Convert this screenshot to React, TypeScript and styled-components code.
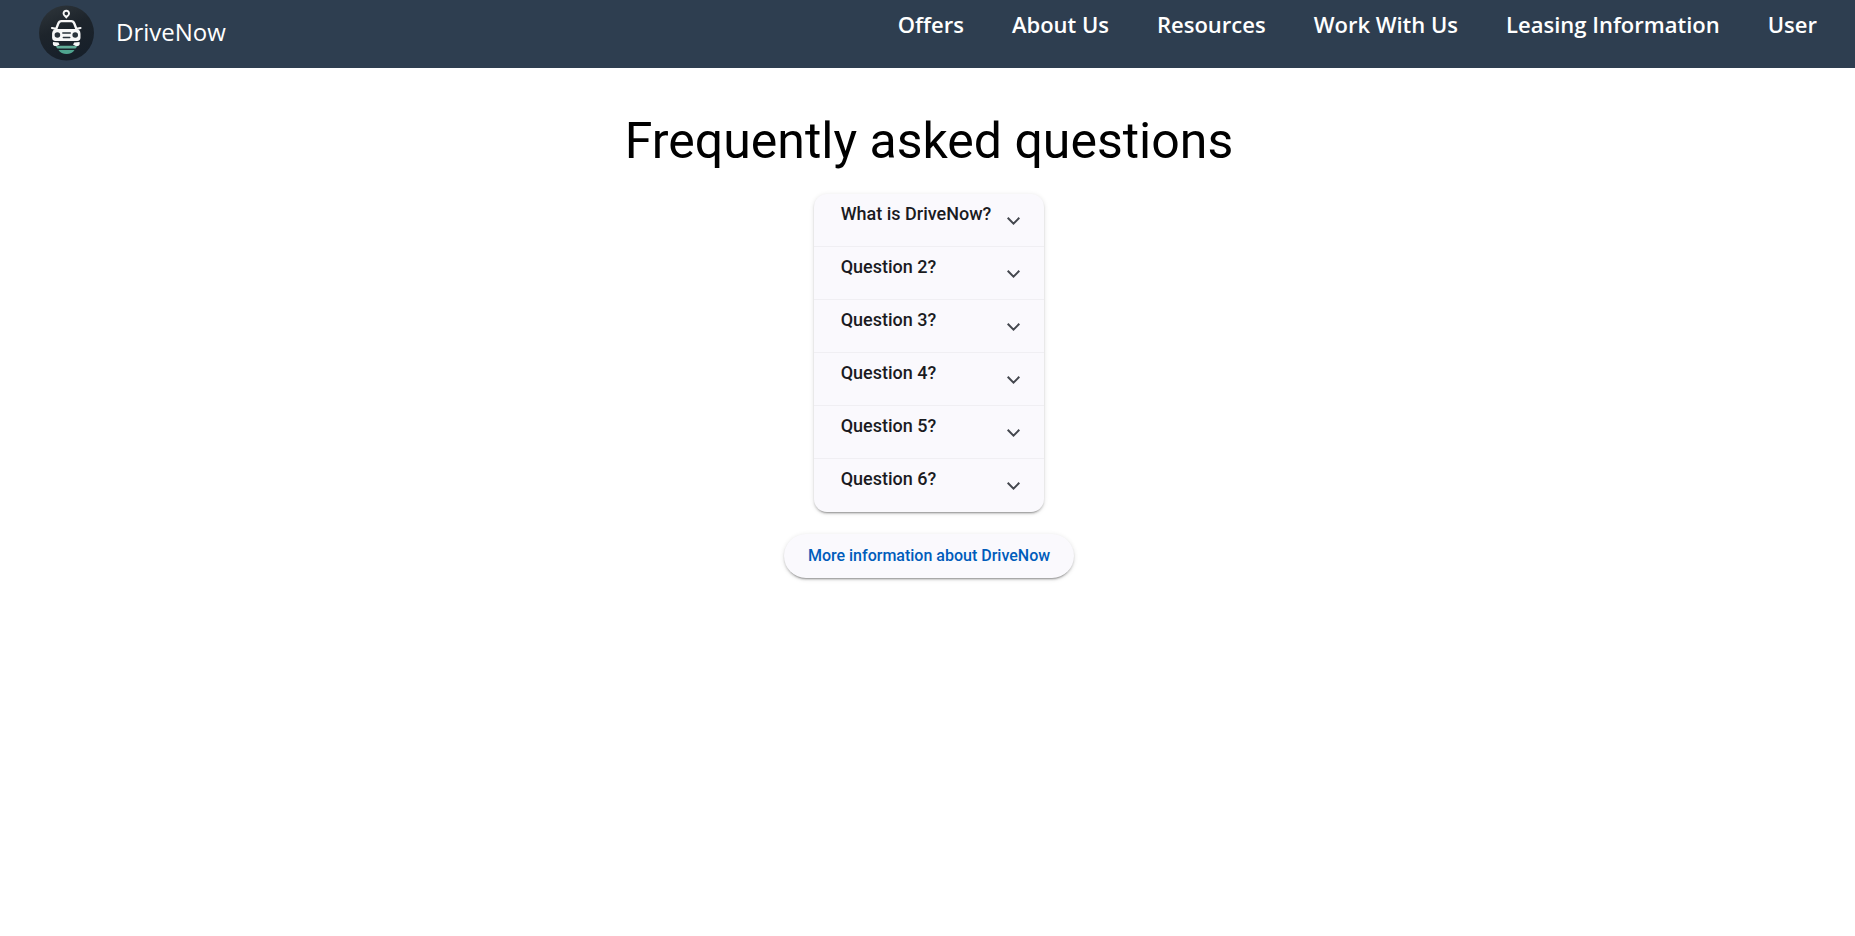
import React from "react";
import styled, { createGlobalStyle } from "styled-components";

const GlobalStyle = createGlobalStyle`
  body {
    margin: 0;
    background: #ffffff;
    color: #000000;
    font-family: Roboto, "Liberation Sans", sans-serif;
  }
`;

const Header = styled.header`
  display: flex;
  justify-content: space-between;
  height: 68px;
  padding: 0 38px;
  background: #2e3e50;
`;

const Brand = styled.a`
  display: flex;
  align-items: center;
  gap: 22px;
  padding-bottom: 2px;
  color: #ffffff;
  font: 400 24px/32px "Open Sans", sans-serif;
  text-decoration: none;
`;

const BrandName = styled.span`
  padding-bottom: 2px;
`;

const Nav = styled.nav`
  display: flex;
  align-items: flex-start;
  gap: 48px;
  padding-top: 8px;
`;

const NavLink = styled.a`
  color: #ffffff;
  font: 600 22px/32px "Open Sans", sans-serif;
  text-decoration: none;
  white-space: nowrap;
`;

const Main = styled.main`
  display: flex;
  flex-direction: column;
  align-items: center;
  padding: 41px 16px 40px 19px;
`;

const Title = styled.h1`
  margin: 0 0 21px;
  font-size: 50px;
  line-height: 64px;
  font-weight: 400;
  text-align: center;
`;

const raised = "0 3px 1px -2px rgba(0,0,0,0.2), 0 2px 2px 0 rgba(0,0,0,0.14), 0 1px 5px 0 rgba(0,0,0,0.12)";

const Accordion = styled.div`
  border-radius: 13px;
  overflow: hidden;
  background: #faf9fd;
  box-shadow: ${raised};
`;

const Question = styled.button`
  display: flex;
  justify-content: space-between;
  gap: 16px;
  width: 100%;
  height: 53px;
  padding: 8px 24px 0 27px;
  border: 0;
  border-bottom: 1px solid #f0eff3;
  background: transparent;
  color: #1a1b1f;
  font: 500 18px/24px Roboto, sans-serif;
  text-align: left;
  cursor: pointer;

  &:last-child {
    border-bottom-color: transparent;
  }
`;

const Chevron = styled.svg`
  flex: none;
  width: 13px;
  height: 8px;
  margin-top: 15px;
`;

const MoreButton = styled.button`
  height: 44px;
  margin-top: 22px;
  padding: 0 24px;
  border: 0;
  border-radius: 22px;
  background: #faf9fd;
  color: #005cbb;
  font: 500 16px/22px Roboto, sans-serif;
  box-shadow: ${raised};
  cursor: pointer;
`;

const links = ["Offers", "About Us", "Resources", "Work With Us", "Leasing Information", "User"];

const questions = ["What is DriveNow?", "Question 2?", "Question 3?", "Question 4?", "Question 5?", "Question 6?"];

function Logo() {
  return (
    <svg width="56" height="56" viewBox="0 0 56 56" aria-hidden="true">
      <defs>
        <linearGradient id="disc" x1="0" y1="0" x2="0.4" y2="1">
          <stop offset="0" stopColor="#30373c" />
          <stop offset="0.5" stopColor="#1d242b" />
          <stop offset="1" stopColor="#17202a" />
        </linearGradient>
      </defs>
      <circle cx="28.5" cy="28" r="27.5" fill="url(#disc)" />
      <path fillRule="evenodd" fill="#f7f7f7" d="M28.300 4.800c2.100 0 3.700 1.600 3.700 3.700 0 2.200-2.500 3.300-3.700 5.300-1.200-2-3.700-3.100-3.700-5.300 0-2.100 1.600-3.700 3.700-3.700zm0 2a1.800 1.800 0 1 0 0 3.600 1.800 1.800 0 0 0 0-3.600z" />
      <path fill="none" stroke="#f7f7f7" strokeWidth="2.300" strokeLinejoin="round" d="M18 24.500l2.300-6c.6-1.600 1.300-2.300 3-2.300h10c1.700 0 2.400.7 3 2.300l2.300 6" />
      <path fill="none" stroke="#f7f7f7" strokeWidth="2.200" strokeLinecap="round" d="M14 23l4 .8M42.500 23l-4 .8" />
      <path fill="#f7f7f7" d="M18.500 24h19.600c2.600 0 4.400 2 4.400 4.800v3.700c0 2.200-1.100 3.500-3.200 3.500h-22c-2.100 0-3.200-1.300-3.200-3.500v-3.700c0-2.800 1.800-4.800 4.400-4.800z" />
      <circle cx="19.400" cy="30" r="2.800" fill="#29323a" />
      <circle cx="37.200" cy="30" r="2.800" fill="#29323a" />
      <path stroke="#29323a" strokeWidth="1.400" strokeLinecap="round" d="M24.800 28h7.500M25.300 32.500h6.500" />
      <path fill="#f7f7f7" d="M15 37l5.500.5 1 2.300-2.700 1.300h-2.200c-1.500-.4-2-2-1.600-4.100zM41.600 37l-5.500.5-1 2.300 2.700 1.300H40c1.500-.4 2-2 1.600-4.100z" />
      <path fill="#62ac98" d="M22 40.800h13l4.500.4-2 2.300h-18l-2-2.300z" />
      <path fill="#4fa48f" d="M20.500 45h16c-1.500 2.600-4.500 4-8 4s-6.500-1.400-8-4z" />
    </svg>
  );
}

export default function App() {
  return (
    <>
      <GlobalStyle />
      <Header>
        <Brand href="#">
          <Logo />
          <BrandName>DriveNow</BrandName>
        </Brand>
        <Nav>
          {links.map((label) => (
            <NavLink key={label} href="#">{label}</NavLink>
          ))}
        </Nav>
      </Header>
      <Main>
        <Title>Frequently asked questions</Title>
        <Accordion>
          {questions.map((question) => (
            <Question key={question} type="button" aria-expanded={false}>
              {question}
              <Chevron viewBox="0 0 13 8" aria-hidden="true">
                <path d="M0.700 0.800l5.800 5.800L12.300 0.800" fill="none" stroke="#44474e" strokeWidth="2" />
              </Chevron>
            </Question>
          ))}
        </Accordion>
        <MoreButton type="button">More information about DriveNow</MoreButton>
      </Main>
    </>
  );
}
